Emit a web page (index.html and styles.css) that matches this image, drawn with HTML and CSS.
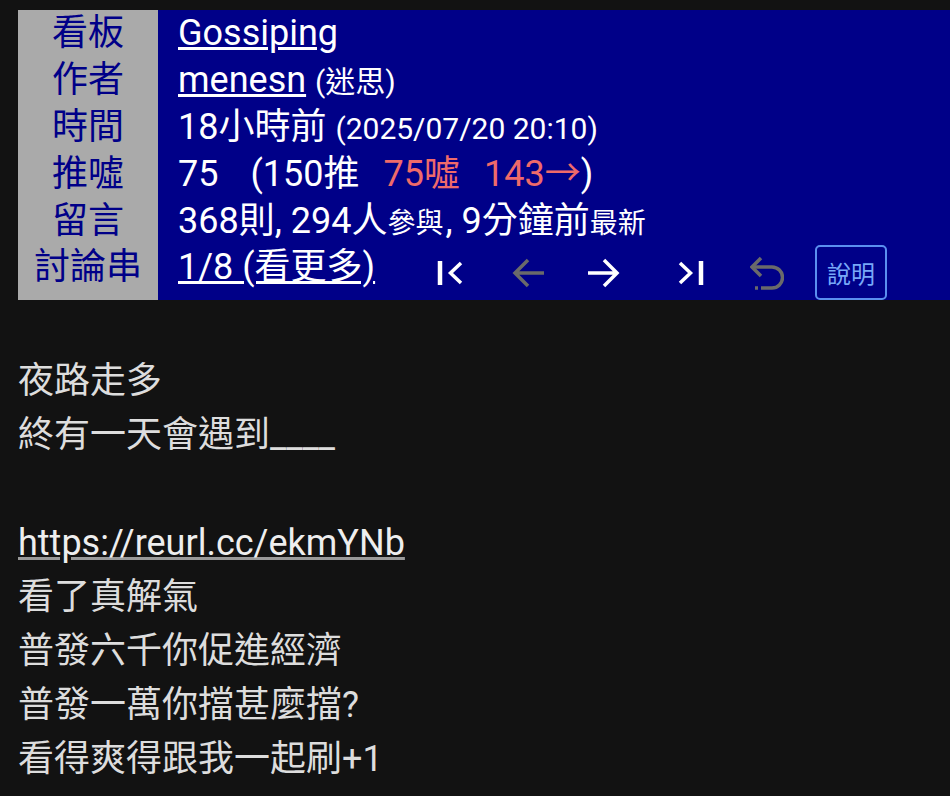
FILE: index.html
```html
<!DOCTYPE html>
<html lang="zh-Hant">
<head>
    <meta charset="UTF-8">
    <meta name="viewport" content="width=device-width, initial-scale=1.0">
    <title>Gossiping</title>
    <link rel="stylesheet" href="styles.css">
</head>
<body>

<div class="head">
    <div class="label">看板</div>
    <div class="value"><a href="#">Gossiping</a></div>

    <div class="label">作者</div>
    <div class="value"><a href="#">menesn</a> <span class="mid">(迷思)</span></div>

    <div class="label">時間</div>
    <div class="value">18小時前 <span class="mid">(2025/07/20 20:10)</span></div>

    <div class="label">推噓</div>
    <div class="value">75<span class="sp wide"></span>(150推<span class="sp"></span><span class="boo">75噓</span><span class="sp"></span><span class="boo">143→</span>)</div>

    <div class="label">留言</div>
    <div class="value">368則, 294人<span class="small">參與</span>, 9分鐘前<span class="small">最新</span></div>

    <div class="label last">討論串</div>
    <div class="value last">
        <div class="thread-wrap"><a href="#" class="thread">1/8 (看更多)</a></div>
        <div class="nav">
            <button class="icon to-first">
                <svg viewBox="0 0 26 26" width="26" height="26"><path d="M3 1 V25" stroke="currentColor" stroke-width="4.5" fill="none"/><path d="M24 3 L13.5 13 L24 23" stroke="currentColor" stroke-width="3.5" fill="none"/></svg>
            </button>
            <button class="icon dim to-prev">
                <svg viewBox="0 0 34 34" width="34" height="34"><path d="M32 17 H3 M16 4 L3 17 L16 30" stroke="currentColor" stroke-width="3.5" fill="none"/></svg>
            </button>
            <button class="icon to-next">
                <svg viewBox="0 0 34 34" width="34" height="34"><path d="M2 17 H31 M18 4 L31 17 L18 30" stroke="currentColor" stroke-width="3.5" fill="none"/></svg>
            </button>
            <button class="icon to-last">
                <svg viewBox="0 0 26 26" width="26" height="26"><path d="M2 3 L12.5 13 L2 23" stroke="currentColor" stroke-width="3.5" fill="none"/><path d="M23 1 V25" stroke="currentColor" stroke-width="4.5" fill="none"/></svg>
            </button>
            <button class="icon dim to-back">
                <svg viewBox="0 0 34 36" width="34" height="36"><path d="M11 3 L2 12 L11 21" stroke="currentColor" stroke-width="3.5" fill="none"/><path d="M2 12 H22 A10.5 10.5 0 0 1 22 33 H11" stroke="currentColor" stroke-width="3.5" fill="none"/><path d="M5 33 H8" stroke="currentColor" stroke-width="3.5" fill="none"/></svg>
            </button>
            <button class="help">說明</button>
        </div>
    </div>
</div>

<div class="content">
    <p>夜路走多<br>終有一天會遇到____</p>
    <p><a href="#" class="link">https://reurl.cc/ekmYNb</a><br>看了真解氣<br>普發六千你促進經濟<br>普發一萬你擋甚麼擋?<br>看得爽得跟我一起刷+1</p>
</div>

</body>
</html>
```

FILE: styles.css
```css
body {
    font-family: Roboto, "Noto Sans CJK TC", sans-serif;
    background-color: #121212;
    color: #dddddd;
    margin: 0;
    padding: 10px 0 0 18px;
}
.head {
    display: grid;
    grid-template-columns: 140px 1fr;
    font-size: 36px;
}
.label {
    background-color: #aaaaaa;
    color: #000088;
    text-align: center;
    height: 47px;
    line-height: 47px;
}
.value {
    background-color: #000088;
    color: #ffffff;
    padding-left: 20px;
    height: 47px;
    line-height: 47px;
    white-space: nowrap;
}
.label.last {
    height: 55px;
    line-height: 44px;
}
.value.last {
    height: 55px;
    display: flex;
    align-items: center;
}
.value a {
    color: #ffffff;
}
.small {
    font-size: 28px;
    margin-right: 2px;
}
.mid {
    font-size: 30px;
}
.sp {
    display: inline-block;
    width: 24px;
}
.sp.wide {
    width: 32px;
}
.boo {
    color: #ef6a6a;
}
.thread-wrap {
    width: 233px;
    align-self: flex-start;
    line-height: 44px;
}
.nav {
    display: flex;
    align-items: center;
    height: 55px;
}
.icon {
    background: none;
    border: none;
    color: #ffffff;
    padding: 0;
    display: flex;
    align-items: center;
}
.icon.dim {
    color: #6a6a6a;
}
.to-first {
    margin-left: 26px;
}
.to-prev {
    margin-left: 49px;
}
.to-next {
    margin-left: 40px;
}
.to-last {
    margin-left: 58px;
}
.to-back {
    margin-left: 46px;
}
.help {
    margin-left: 31px;
    height: 55px;
    width: 72px;
    background: none;
    border: 2px solid #5a8ff0;
    border-radius: 5px;
    color: #78a8f8;
    font-family: "Noto Sans CJK TC", sans-serif;
    font-size: 24px;
    padding: 0;
}
.content {
    font-size: 36px;
    line-height: 54px;
    margin-top: 54px;
}
.content p {
    margin: 0 0 54px 0;
}
.link {
    color: #eeeeee;
    text-decoration-color: #999999;
}
```
